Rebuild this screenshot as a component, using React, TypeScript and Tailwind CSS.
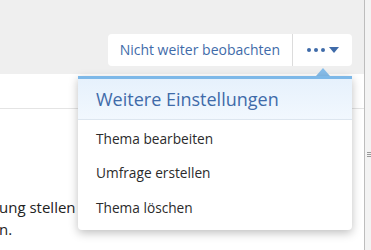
import React from 'react';

const items = ['Thema bearbeiten', 'Umfrage erstellen', 'Thema löschen'];

const App: React.FC = () => {
  return (
    <div
      className="relative flex h-[250px] w-[371px] overflow-hidden bg-white"
      style={{ fontFamily: '"Open Sans", "Noto Sans", sans-serif' }}
    >
      <div className="flex flex-1 flex-col">
        <div className="flex h-[74px] items-start justify-end bg-[#efefef] pr-[12px] pt-[34px]">
          <div className="flex h-[32px] rounded-[4px] bg-white text-[14px] text-[#3f6ba9]">
            <button className="border-r border-[#dcdcdc] px-[12px] leading-[32px]">Nicht weiter beobachten</button>
            <button className="flex w-[59px] items-center justify-center gap-[4px]">
              <span className="flex gap-[3px]">
                <span className="h-[4px] w-[4px] rounded-full bg-[#3f6ba9]" />
                <span className="h-[4px] w-[4px] rounded-full bg-[#3f6ba9]" />
                <span className="h-[4px] w-[4px] rounded-full bg-[#3f6ba9]" />
              </span>
              <svg width="10" height="6" viewBox="0 0 10 6"><path d="M0 0h10L5 6z" fill="#3f6ba9" /></svg>
            </button>
          </div>
        </div>
        <div className="h-[35px] border-b border-[#e4e4e4]" />
        <div className="mt-[87px] text-[15px] leading-[22px] text-[#222]">
          <div className="-ml-[1px]">ung stellen</div>
          <div className="-ml-[1px]">n.</div>
        </div>
      </div>
      <div className="relative w-[7px] border-l border-[#bdbdbd] bg-[#f3f3f3]">
        <div className="absolute left-[2px] top-[152px] flex flex-col gap-[1px]">
          <span className="h-px w-[4px] bg-[#999]" />
          <span className="h-px w-[4px] bg-[#999]" />
          <span className="h-px w-[4px] bg-[#999]" />
        </div>
      </div>

      <svg className="absolute left-[316px] top-[68px]" width="14" height="8" viewBox="0 0 14 8">
        <path d="M7 0L14 8H0z" fill="#86bdea" />
      </svg>
      <div className="absolute left-[78px] top-[76px] w-[274px] rounded-b-[4px] border-t-[3px] border-[#7db8e8] bg-white shadow-[0_3px_10px_rgba(0,0,0,0.25)]">
        <div className="flex h-[41px] items-center border-b border-[#dde6ef] bg-gradient-to-b from-[#e6f1fc] to-[#f2f8fe] px-[18px] text-[18px] text-[#3f6ba9]">
          Weitere Einstellungen
        </div>
        <div className="pb-[4px] pt-[2px]">
          {items.map((t) => (
            <div key={t} className="flex h-[34.5px] items-center px-[18px] text-[13.7px] text-[#2b2b2b]">
              {t}
            </div>
          ))}
        </div>
      </div>
    </div>
  );
};

export default App;
